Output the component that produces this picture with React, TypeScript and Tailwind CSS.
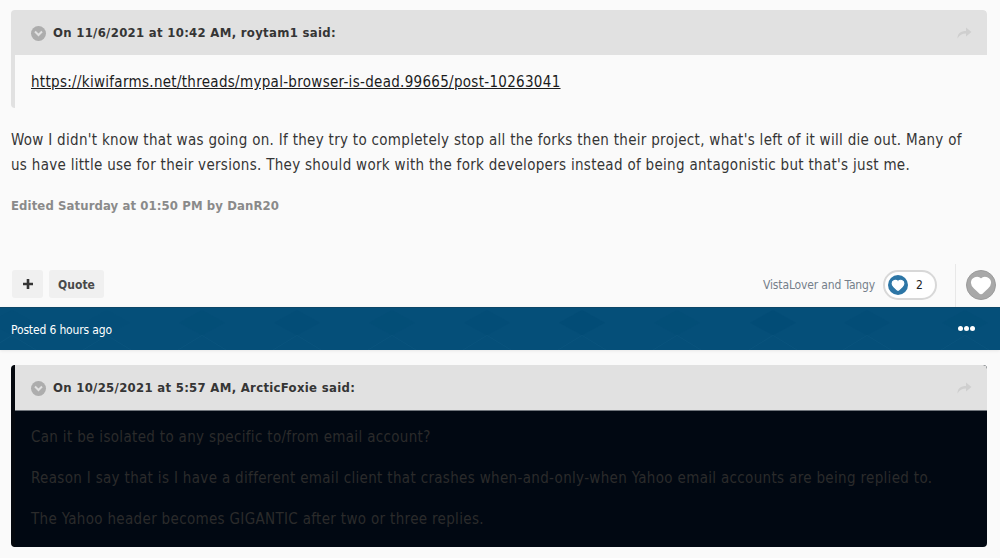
import { Heart } from "lucide-react";

const FONT = "font-['DejaVu_Sans_Condensed','DejaVu_Sans',sans-serif]";

function QuoteHeader({ text, dark }: { text: string; dark?: boolean }) {
  return (
    <div className={`flex items-center justify-between rounded-tr-[4px] bg-[#e1e1e1] pl-[16px] pr-[15px] pt-[1px] ${dark ? "h-[46px] border-b border-[#70757b]" : "h-[45px]"}`}>
      <div className="flex items-center gap-[7px]">
        <span className="flex h-[15px] w-[15px] items-center justify-center rounded-full bg-[#adadad]">
          <svg width="9" height="7" viewBox="0 0 9 7">
            <path d="M1 1.5 L4.5 5 L8 1.5" fill="none" stroke="#e1e1e1" strokeWidth="2" />
          </svg>
        </span>
        <span className="text-[13px] font-bold tracking-[0.3px] text-[#353535]">{text}</span>
      </div>
      <svg width="15" height="12" viewBox="0 0 15 12">
        <path d="M0.5 11.5 C0.5 6 4 4 9 4 V0.5 L14.5 5 L9 9.5 V6.5 C5 6.5 2.5 8 0.5 11.5 Z" fill="#cfcfcf" />
      </svg>
    </div>
  );
}

function BandPattern() {
  const diamonds = [
    [12, 0.12], [107, 0.1], [202, 0.25], [297, 0.3], [392, 0.25], [487, 0.3], [582, 0.5], [677, 0.25], [773, 0.45], [867, 0.3], [965, 0.25],
  ];
  return (
    <svg className="absolute inset-0 h-full w-full" viewBox="0 0 1000 43" preserveAspectRatio="none">
      {diamonds.map(([x, o]) => (
        <g key={x}>
          <polygon points={`${x - 23},15 ${x},2 ${x + 23},15 ${x},28`} fill="#004a74" opacity={o} />
          <path d={`M${x - 24},43 L${x},28 L${x + 24},43`} fill="none" stroke="#1a6189" strokeWidth="1" opacity="0.25" />
        </g>
      ))}
    </svg>
  );
}

export default function App() {
  return (
    <div className={`h-[558px] w-[1000px] overflow-hidden bg-[#fafafa] ${FONT}`}>
      <div className="px-[11px] pt-[10px]">
        <div className="mr-[2px] overflow-hidden rounded-[4px] border-l-[4px] border-[#e1e1e1]">
          <QuoteHeader text="On 11/6/2021 at 10:42 AM, roytam1 said:" />
          <div className="h-[53px] pl-[16px] pt-[15px]">
            <a className="text-[15px] leading-[22px] tracking-[0.3px] text-[#1c1c1c] underline">
              https://kiwifarms.net/threads/mypal-browser-is-dead.99665/post-10263041
            </a>
          </div>
        </div>
        <p className="mt-[20px] w-[965px] text-[15px] leading-[25px] tracking-[0.3px] text-[#353535]">
          Wow I didn't know that was going on. If they try to completely stop all the forks then their project, what's left of it will die out. Many of us have little use for their versions. They should work with the fork developers instead of being antagonistic but that's just me.
        </p>
        <p className="mt-[19px] text-[13px] font-bold leading-[18px] tracking-[0.1px] text-[#8a8a8a]">Edited Saturday at 01:50 PM by DanR20</p>
      </div>

      <div className="mt-[49px] flex h-[43px] items-start justify-between pl-[12px] pr-[4px]">
        <div className="mt-[6px] flex gap-[6px]">
          <button className="flex h-[28px] w-[31px] items-center justify-center rounded-[3px] bg-[#f0f0f0] text-[#333]">
            <svg width="12" height="12" viewBox="0 0 12 12"><path d="M6 1 V11 M1 6 H11" stroke="#353535" strokeWidth="2.6" /></svg>
          </button>
          <button className="h-[28px] w-[55px] rounded-[3px] bg-[#f0f0f0] pt-[1px] text-[12px] font-bold text-[#4a4a4a]">Quote</button>
        </div>
        <div className="flex items-start">
          <span className="mt-[13px] mr-[8px] text-[12px] leading-[16px] tracking-[-0.15px] text-[#757f8a]">VistaLover and Tangy</span>
          <div className="mt-[6px] flex h-[30px] w-[54px] items-center rounded-full border-2 border-[#d8d8d8] bg-white pl-[3px]">
            <span className="flex h-[20px] w-[20px] items-center justify-center rounded-full bg-[#2d76a6]">
              <Heart size={14} fill="#fff" stroke="#fff" />
            </span>
            <span className="ml-[8px] text-[12px] text-[#222]">2</span>
          </div>
          <div className="ml-[18px] h-[43px] w-[1px] bg-[#e8e8e8]" />
          <span className="ml-[10px] mt-[6px] flex h-[30px] w-[30px] items-center justify-center rounded-full border border-[#9b9b9b] bg-[#a8a8a8]">
            <Heart size={22} fill="#fff" stroke="#fff" />
          </span>
        </div>
      </div>

      <div className="relative flex h-[43px] items-center justify-between border-t border-[#0d4768] bg-[#054f79] pl-[11px] pr-[25px] pt-[1px] shadow-[0_1px_3px_rgba(0,0,0,0.08)]">
        <BandPattern />
        <span className="relative text-[12px] tracking-[-0.15px] text-white">Posted 6 hours ago</span>
        <span className="relative -mt-[3px] flex gap-[1px]">
          <i className="h-[5px] w-[5px] rounded-full bg-white" />
          <i className="h-[5px] w-[5px] rounded-full bg-white" />
          <i className="h-[5px] w-[5px] rounded-full bg-white" />
        </span>
      </div>

      <div className="px-[11px] pt-[15px]">
        <div className="mr-[2px] h-[182px] overflow-hidden rounded-[4px] border-l-[4px] border-[#05090f] bg-[#010812]">
          <QuoteHeader text="On 10/25/2021 at 5:57 AM, ArcticFoxie said:" dark />
          <div className="pl-[16px] pt-[15px] text-[15px] leading-[22px] tracking-[0.33px] text-[#2b2b2b]">
            <p>Can it be isolated to any specific to/from email account?</p>
            <p className="mt-[19px]">Reason I say that is I have a different email client that crashes when-and-only-when Yahoo email accounts are being replied to.</p>
            <p className="mt-[19px]">The Yahoo header becomes GIGANTIC after two or three replies.</p>
          </div>
        </div>
      </div>
    </div>
  );
}
